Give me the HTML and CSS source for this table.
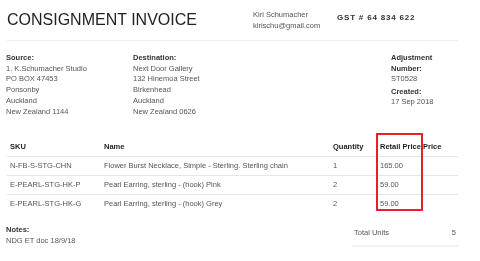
FILE: index.html
```html
<!DOCTYPE html>
<html lang="en">
<head>
  <meta charset="UTF-8">
  <meta name="viewport" content="width=device-width, initial-scale=1.0">
  <title>Consignment Invoice</title>
  <link rel="stylesheet" href="styles.css">
</head>
<body>
  <div class="invoice">
    <div class="header">
      <h1 class="title">CONSIGNMENT INVOICE</h1>
      <div class="contact">
        <div>Kiri Schumacher</div>
        <div>kirischu@gmail.com</div>
      </div>
      <div class="gst">GST # 64 834 622</div>
    </div>

    <div class="addresses">
      <div class="address source">
        <div class="label">Source:</div>
        <div>1. K.Schumacher Studio</div>
        <div>PO BOX 47453</div>
        <div>Ponsonby</div>
        <div>Auckland</div>
        <div>New Zealand 1144</div>
      </div>
      <div class="address destination">
        <div class="label">Destination:</div>
        <div>Next Door Gallery</div>
        <div>132 Hinemoa Street</div>
        <div>Birkenhead</div>
        <div>Auckland</div>
        <div>New Zealand 0626</div>
      </div>
      <div class="address meta">
        <div class="label">Adjustment Number:</div>
        <div>ST0528</div>
        <div class="label created">Created:</div>
        <div>17 Sep 2018</div>
      </div>
    </div>

    <div class="items-wrap">
      <table class="items">
        <colgroup>
          <col class="col-sku">
          <col class="col-name">
          <col class="col-qty">
          <col class="col-retail">
          <col class="col-price">
        </colgroup>
        <thead>
          <tr>
            <th>SKU</th>
            <th>Name</th>
            <th>Quantity</th>
            <th>Retail Price</th>
            <th>Price</th>
          </tr>
        </thead>
        <tbody>
          <tr>
            <td>N-FB-S-STG-CHN</td>
            <td>Flower Burst Necklace, Simple - Sterling. Sterling chain</td>
            <td>1</td>
            <td>165.00</td>
            <td></td>
          </tr>
          <tr>
            <td>E-PEARL-STG-HK-P</td>
            <td>Pearl Earring, sterling - (hook) Pink</td>
            <td>2</td>
            <td>59.00</td>
            <td></td>
          </tr>
          <tr>
            <td>E-PEARL-STG-HK-G</td>
            <td>Pearl Earring, sterling - (hook) Grey</td>
            <td>2</td>
            <td>59.00</td>
            <td></td>
          </tr>
        </tbody>
      </table>
      <!-- highlight around the retail price column -->
      <div class="highlight"></div>
    </div>

    <div class="footer">
      <div class="notes">
        <div class="label">Notes:</div>
        <div>NDG ET doc 18/9/18</div>
      </div>
      <div class="totals">
        <span>Total Units</span>
        <span>5</span>
      </div>
    </div>
  </div>
</body>
</html>
```

FILE: styles.css
```css
body {
  margin: 0;
  background: #fff;
  font-family: "Liberation Sans", Arial, sans-serif;
  font-size: 7.5px;
  line-height: 10.7px;
  color: #555;
}

.invoice {
  width: 452px;
  padding-left: 6px;
  /* own layer keeps the small text greyscale-smoothed */
  will-change: transform;
}

.label {
  font-weight: bold;
  color: #333;
}

/* Header */
.header {
  display: flex;
  align-items: center;
  height: 40px;
  margin-left: 1px;
  border-bottom: 1px solid #eee;
}

.title {
  width: 246px;
  margin: 0;
  font-size: 16px;
  font-weight: normal;
  line-height: 18px;
  color: #222;
}

.contact {
  width: 84px;
  line-height: 11px;
  margin-top: -1px;
}

.gst {
  font-size: 8px;
  font-weight: bold;
  letter-spacing: 0.8px;
  color: #333;
  margin-top: -3px;
}

/* Addresses */
.addresses {
  display: flex;
  margin-top: 12px;
}

.source {
  width: 127px;
}

.destination {
  width: 258px;
}

.meta {
  width: 66px;
}

.meta .created {
  margin-top: 1.5px;
}

/* Items table */
.items-wrap {
  position: relative;
  margin-top: 20px;
  margin-left: 1px;
}

.items {
  width: 451px;
  table-layout: fixed;
  border-collapse: collapse;
}

.col-sku { width: 94px; }
.col-name { width: 229px; }
.col-qty { width: 47px; }
.col-retail { width: 43px; }
.col-price { width: 38px; }

.items th,
.items td {
  padding: 4px 0 4px 3px;
  line-height: 10px;
  text-align: left;
  white-space: nowrap;
  overflow: visible;
}

.items th {
  font-weight: bold;
  color: #222;
  padding-top: 5px;
}

.items tbody td {
  border-top: 1px solid #e6e6e6;
}

.highlight {
  position: absolute;
  left: 369px;
  top: -4px;
  width: 43px;
  height: 74px;
  border: 2px solid #e5222b;
}

/* Footer */
.footer {
  display: flex;
  justify-content: space-between;
  margin-top: 12px;
}

.totals {
  display: flex;
  justify-content: space-between;
  width: 102px;
  margin-top: 3px;
  padding: 0 2px 6px 2px;
  height: 11px;
  border-bottom: 2px solid #f1f1f1;
}
```
